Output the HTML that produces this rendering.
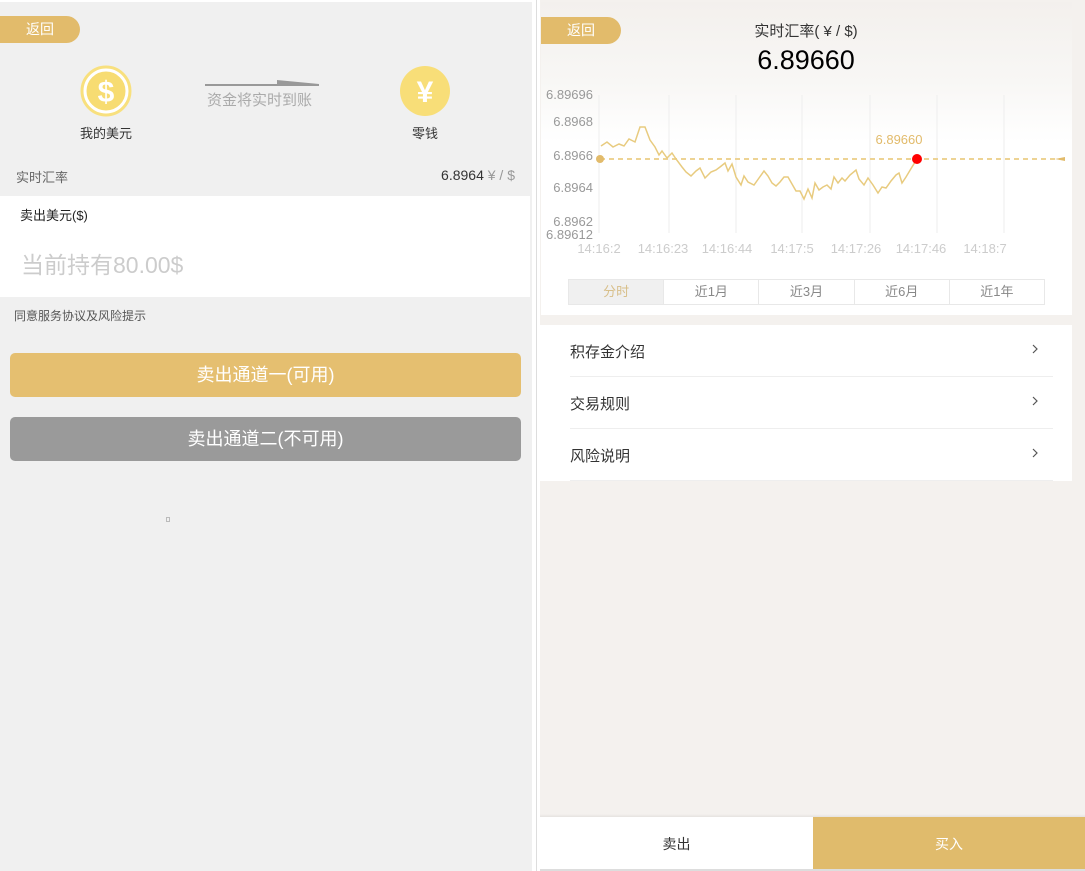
<!DOCTYPE html>
<html><head><meta charset="utf-8"><style>
*{margin:0;padding:0;box-sizing:border-box}
body{width:1085px;height:871px;background:#fff;font-family:"Liberation Sans","Noto Sans CJK SC",sans-serif;position:relative;overflow:hidden}
.a{position:absolute}
.back{position:absolute;height:27px;width:80px;background:#e2bb6b;border-radius:0 14px 14px 0;color:#fff;font-size:14px;line-height:27px;padding-left:26px}
</style></head><body>
<!-- left -->
<div class="a" style="left:0;top:2px;width:532px;height:869px;background:#f0f0f0"></div>
<div class="back" style="left:0;top:16px">返回</div>
<svg class="a" style="left:78px;top:63px" width="56" height="56"><circle cx="28" cy="28" r="25" fill="#f8e07e" stroke="#f8e07e"/><circle cx="28" cy="28" r="21" fill="#f7dc72" stroke="#fff" stroke-width="3"/><text x="28" y="39" text-anchor="middle" font-size="30" font-weight="bold" fill="#fff" font-family="Liberation Sans">$</text></svg>
<div class="a" style="left:60px;top:123px;width:92px;text-align:center;font-size:13px;color:#333">我的美元</div>
<svg class="a" style="left:205px;top:79px" width="116" height="8"><line x1="0" y1="6" x2="114" y2="6" stroke="#999" stroke-width="2"/><polygon points="72,1 114,5 72,6" fill="#999"/></svg>
<div class="a" style="left:207px;top:89px;font-size:15px;color:#aaa">资金将实时到账</div>
<svg class="a" style="left:399px;top:65px" width="52" height="52"><circle cx="26" cy="26" r="25" fill="#f8de78"/><text x="26" y="37" text-anchor="middle" font-size="30" font-weight="bold" fill="#fff" font-family="Liberation Sans">¥</text></svg>
<div class="a" style="left:400px;top:123px;width:50px;text-align:center;font-size:13px;color:#333">零钱</div>
<div class="a" style="left:16px;top:167px;font-size:13px;color:#666">实时汇率</div>
<div class="a" style="right:570px;top:167px;font-size:14px;color:#333">6.8964 <span style="color:#999">¥ / $</span></div>
<div class="a" style="left:0;top:196px;width:530px;height:101px;background:#fff"></div>
<div class="a" style="left:20px;top:205px;font-size:13px;color:#222">卖出美元($)</div>
<div class="a" style="left:21px;top:246px;font-size:23px;color:#ccc">当前持有80.00$</div>
<div class="a" style="left:14px;top:307px;font-size:12px;color:#555">同意服务协议及风险提示</div>
<div class="a" style="left:10px;top:353px;width:511px;height:44px;background:#e5bf70;border-radius:5px;color:#fff;font-size:18px;text-align:center;line-height:44px">卖出通道一(可用)</div>
<div class="a" style="left:10px;top:417px;width:511px;height:44px;background:#9a9a9a;border-radius:5px;color:#fff;font-size:18px;text-align:center;line-height:44px">卖出通道二(不可用)</div>
<div class="a" style="left:166px;top:517px;width:4px;height:5px;border:1px solid #bbb"></div>
<!-- right -->
<div class="a" style="left:536px;top:0;width:1px;height:871px;background:#ddd"></div>
<div class="a" style="left:540px;top:0;width:545px;height:871px;background:#f4f1ee"></div>
<div class="a" style="left:541px;top:2px;width:531px;height:313px;background:linear-gradient(#f3f0ed 0,#f8f7f5 80px,#fff 140px)"></div>
<div class="back" style="left:541px;top:17px">返回</div>
<div class="a" style="left:540px;top:20px;width:532px;text-align:center;font-size:15px;color:#333">实时汇率( ¥ / $)</div>
<div class="a" style="left:540px;top:45px;width:532px;text-align:center;font-size:27px;color:#000">6.89660</div>
<svg class="a" style="left:540px;top:85px" width="532" height="175" font-family="Liberation Sans" font-size="13" fill="#999">
<g stroke="#eee"><line x1="59" y1="10" x2="59" y2="148"/><line x1="129" y1="10" x2="129" y2="148"/><line x1="196" y1="10" x2="196" y2="148"/><line x1="262" y1="10" x2="262" y2="148"/><line x1="330" y1="10" x2="330" y2="148"/><line x1="397" y1="10" x2="397" y2="148"/><line x1="464" y1="10" x2="464" y2="148"/></g>
<g text-anchor="end"><text x="53" y="14">6.89696</text><text x="53" y="41">6.8968</text><text x="53" y="75">6.8966</text><text x="53" y="107">6.8964</text><text x="53" y="141">6.8962</text><text x="53" y="154">6.89612</text></g>
<g fill="#ccc" text-anchor="middle"><text x="59" y="168">14:16:2</text><text x="123" y="168">14:16:23</text><text x="187" y="168">14:16:44</text><text x="252" y="168">14:17:5</text><text x="316" y="168">14:17:26</text><text x="381" y="168">14:17:46</text><text x="445" y="168">14:18:7</text></g>
<line x1="60" y1="74" x2="525" y2="74" stroke="#edd394" stroke-width="2" stroke-dasharray="5,4"/>
<circle cx="60" cy="74" r="4" fill="#e2bb6b"/>
<polygon points="515,74 525,72 525,76" fill="#e2bb6b"/>
<polyline fill="none" stroke="#e8cb7f" stroke-width="1.5" points="61,61 67,57 73,62 79,59 84,61 89,54 95,57 100,42 105,42 110,55 115,62 119,70 122,66 127,73 132,68 136,74 142,82 146,87 151,91 156,86 160,83 165,93 171,87 176,85 180,82 185,78 188,86 192,79 196,92 201,100 204,91 208,97 214,100 219,93 224,86 228,91 232,98 236,101 240,97 244,92 248,92 252,99 256,106 260,106 264,114 268,104 272,113 275,98 279,105 283,102 287,100 291,104 294,92 298,98 302,93 305,96 310,90 316,85 319,94 324,100 328,93 333,100 338,108 342,102 346,103 351,96 356,90 359,88 362,98 366,92 372,82 377,74"/>
<circle cx="377" cy="74" r="5" fill="#f00"/>
<text x="359" y="59" fill="#e2bb6b" text-anchor="middle">6.89660</text>
</svg>
<div class="a" style="left:568px;top:279px;width:477px;height:26px;border:1px solid #e8e8e8;display:flex;font-size:13px;color:#888;line-height:24px;text-align:center">
<div style="flex:1;background:#f0f0f0;color:#d8bf8a">分时</div><div style="flex:1;border-left:1px solid #e8e8e8">近1月</div><div style="flex:1;border-left:1px solid #e8e8e8">近3月</div><div style="flex:1;border-left:1px solid #e8e8e8">近6月</div><div style="flex:1;border-left:1px solid #e8e8e8">近1年</div></div>
<div class="a" style="left:540px;top:325px;width:532px;height:156px;background:#fff"></div>
<div class="a" style="left:570px;top:376px;width:483px;height:1px;background:#eee"></div>
<div class="a" style="left:570px;top:428px;width:483px;height:1px;background:#eee"></div>
<div class="a" style="left:570px;top:480px;width:483px;height:1px;background:#eee"></div>
<div class="a" style="left:570px;top:341px;font-size:15px;color:#333">积存金介绍</div>
<div class="a" style="left:570px;top:393px;font-size:15px;color:#333">交易规则</div>
<div class="a" style="left:570px;top:445px;font-size:15px;color:#333">风险说明</div>
<svg class="a" style="left:1032px;top:344px" width="6" height="10"><path d="M1 1L5 5L1 9" fill="none" stroke="#555" stroke-width="1.2"/></svg>
<svg class="a" style="left:1032px;top:396px" width="6" height="10"><path d="M1 1L5 5L1 9" fill="none" stroke="#555" stroke-width="1.2"/></svg>
<svg class="a" style="left:1032px;top:448px" width="6" height="10"><path d="M1 1L5 5L1 9" fill="none" stroke="#555" stroke-width="1.2"/></svg>
<div class="a" style="left:540px;top:814px;width:545px;height:3px;background:linear-gradient(#f4f1ee,#e6e3e0)"></div>
<div class="a" style="left:540px;top:817px;width:273px;height:52px;background:#fff;text-align:center;line-height:54px;font-size:14px;color:#333">卖出</div>
<div class="a" style="left:813px;top:817px;width:272px;height:52px;background:#e0bb6c;text-align:center;line-height:54px;font-size:14px;color:#fff">买入</div>
<div class="a" style="left:540px;top:869px;width:545px;height:2px;background:#ddd"></div>
</body></html>
